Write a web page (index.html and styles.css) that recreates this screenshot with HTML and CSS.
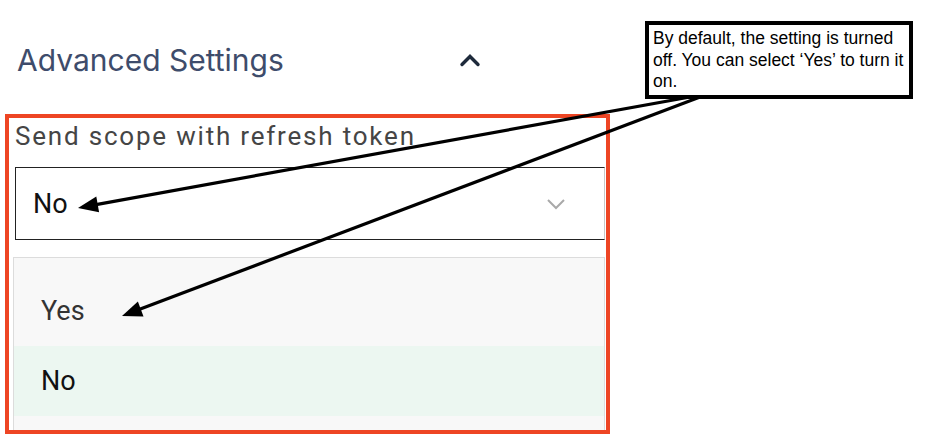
FILE: index.html
```html
<!DOCTYPE html>
<html>
<head>
<meta charset="utf-8">
<link rel="stylesheet" href="styles.css">
</head>
<body>
<div class="page">
  <div class="header">
    <span class="header-title">Advanced Settings</span>
    <svg class="chev-up" width="22" height="15" viewBox="0 0 22 15"><path d="M3 12.5 L11 4.5 L19 12.5" fill="none" stroke="#1e2a3b" stroke-width="3.4" stroke-linecap="round" stroke-linejoin="miter"/></svg>
  </div>
  <div class="highlight">
    <div class="field-label">Send scope with refresh token</div>
    <div class="select">
      <span class="select-value">No</span>
      <svg class="chev-down" width="20" height="12" viewBox="0 0 20 12"><path d="M2 2 L10 10 L18 2" fill="none" stroke="#a9a9a9" stroke-width="2"/></svg>
    </div>
    <div class="options">
      <div class="option">Yes</div>
      <div class="option selected">No</div>
    </div>
  </div>
  <div class="callout">By default, the setting is turned off. You can select ‘Yes’ to turn it on.</div>
  <svg class="arrows" width="926" height="438" viewBox="0 0 926 438">
    <line x1="690" y1="97" x2="96" y2="204.6" stroke="#000" stroke-width="3.2"/>
    <polygon points="78,208 99.1,212.3 96.3,196.5" fill="#000"/>
    <line x1="700" y1="97" x2="139" y2="309.5" stroke="#000" stroke-width="3.2"/>
    <polygon points="122,316 143.5,316.4 137.9,301.4" fill="#000"/>
  </svg>
</div>
</body>
</html>
```
FILE: styles.css
```css
html, body {
  margin: 0;
  padding: 0;
  background: #ffffff;
}
.page {
  position: relative;
  width: 926px;
  height: 438px;
  overflow: hidden;
}
.header {
  display: flex;
  align-items: center;
  justify-content: space-between;
  width: 464px;
  height: 40px;
  padding: 40px 0 0 17px;
}
.header-title {
  font-family: "Inter", "Noto Sans", sans-serif;
  font-size: 30px;
  color: #3e4c6b;
  line-height: 40px;
}
.chev-up {
  display: block;
  margin-top: -2px;
}
.highlight {
  margin: 34px 0 0 5px;
  width: 591px;
  height: 312px;
  border: 4px solid #ee4524;
  padding-left: 6px;
  box-sizing: content-box;
  overflow: hidden;
  font-family: "Roboto", "Liberation Sans", sans-serif;
}
.field-label {
  margin-top: 3px;
  font-size: 26px;
  line-height: 30px;
  color: #454545;
  letter-spacing: 1.8px;
}
.select {
  margin-top: 16px;
  width: 590px;
  height: 73px;
  box-sizing: border-box;
  border: 1.5px solid #222;
  border-right-color: #c8c8c8;
  display: flex;
  align-items: center;
  justify-content: space-between;
  padding: 0 38px 0 17px;
}
.select-value {
  font-size: 27px;
  color: #111;
}
.chev-down {
  display: block;
}
.options {
  margin: 17px 0 0 -2px;
  width: 592px;
  height: 200px;
  box-sizing: border-box;
  background: #f8f8f8;
  border-top: 1.5px solid #dcdcdc;
  border-left: 1.5px solid #dcdcdc;
  border-right: 1px solid #dcdcdc;
  padding-top: 18px;
}
.option {
  height: 70px;
  display: flex;
  align-items: center;
  padding-left: 27px;
  font-size: 27px;
  color: #333;
}
.option.selected {
  background: #ecf7f1;
  color: #111;
}
.callout {
  position: absolute;
  left: 645px;
  top: 21px;
  width: 268px;
  height: 78px;
  box-sizing: border-box;
  border: 4px solid #000;
  background: #fff;
  padding: 3px 4px 0 4px;
  font-family: "Liberation Sans", Arial, sans-serif;
  font-size: 17.5px;
  line-height: 21.5px;
  color: #000;
}
.arrows {
  position: absolute;
  left: 0;
  top: 0;
  pointer-events: none;
}
```
